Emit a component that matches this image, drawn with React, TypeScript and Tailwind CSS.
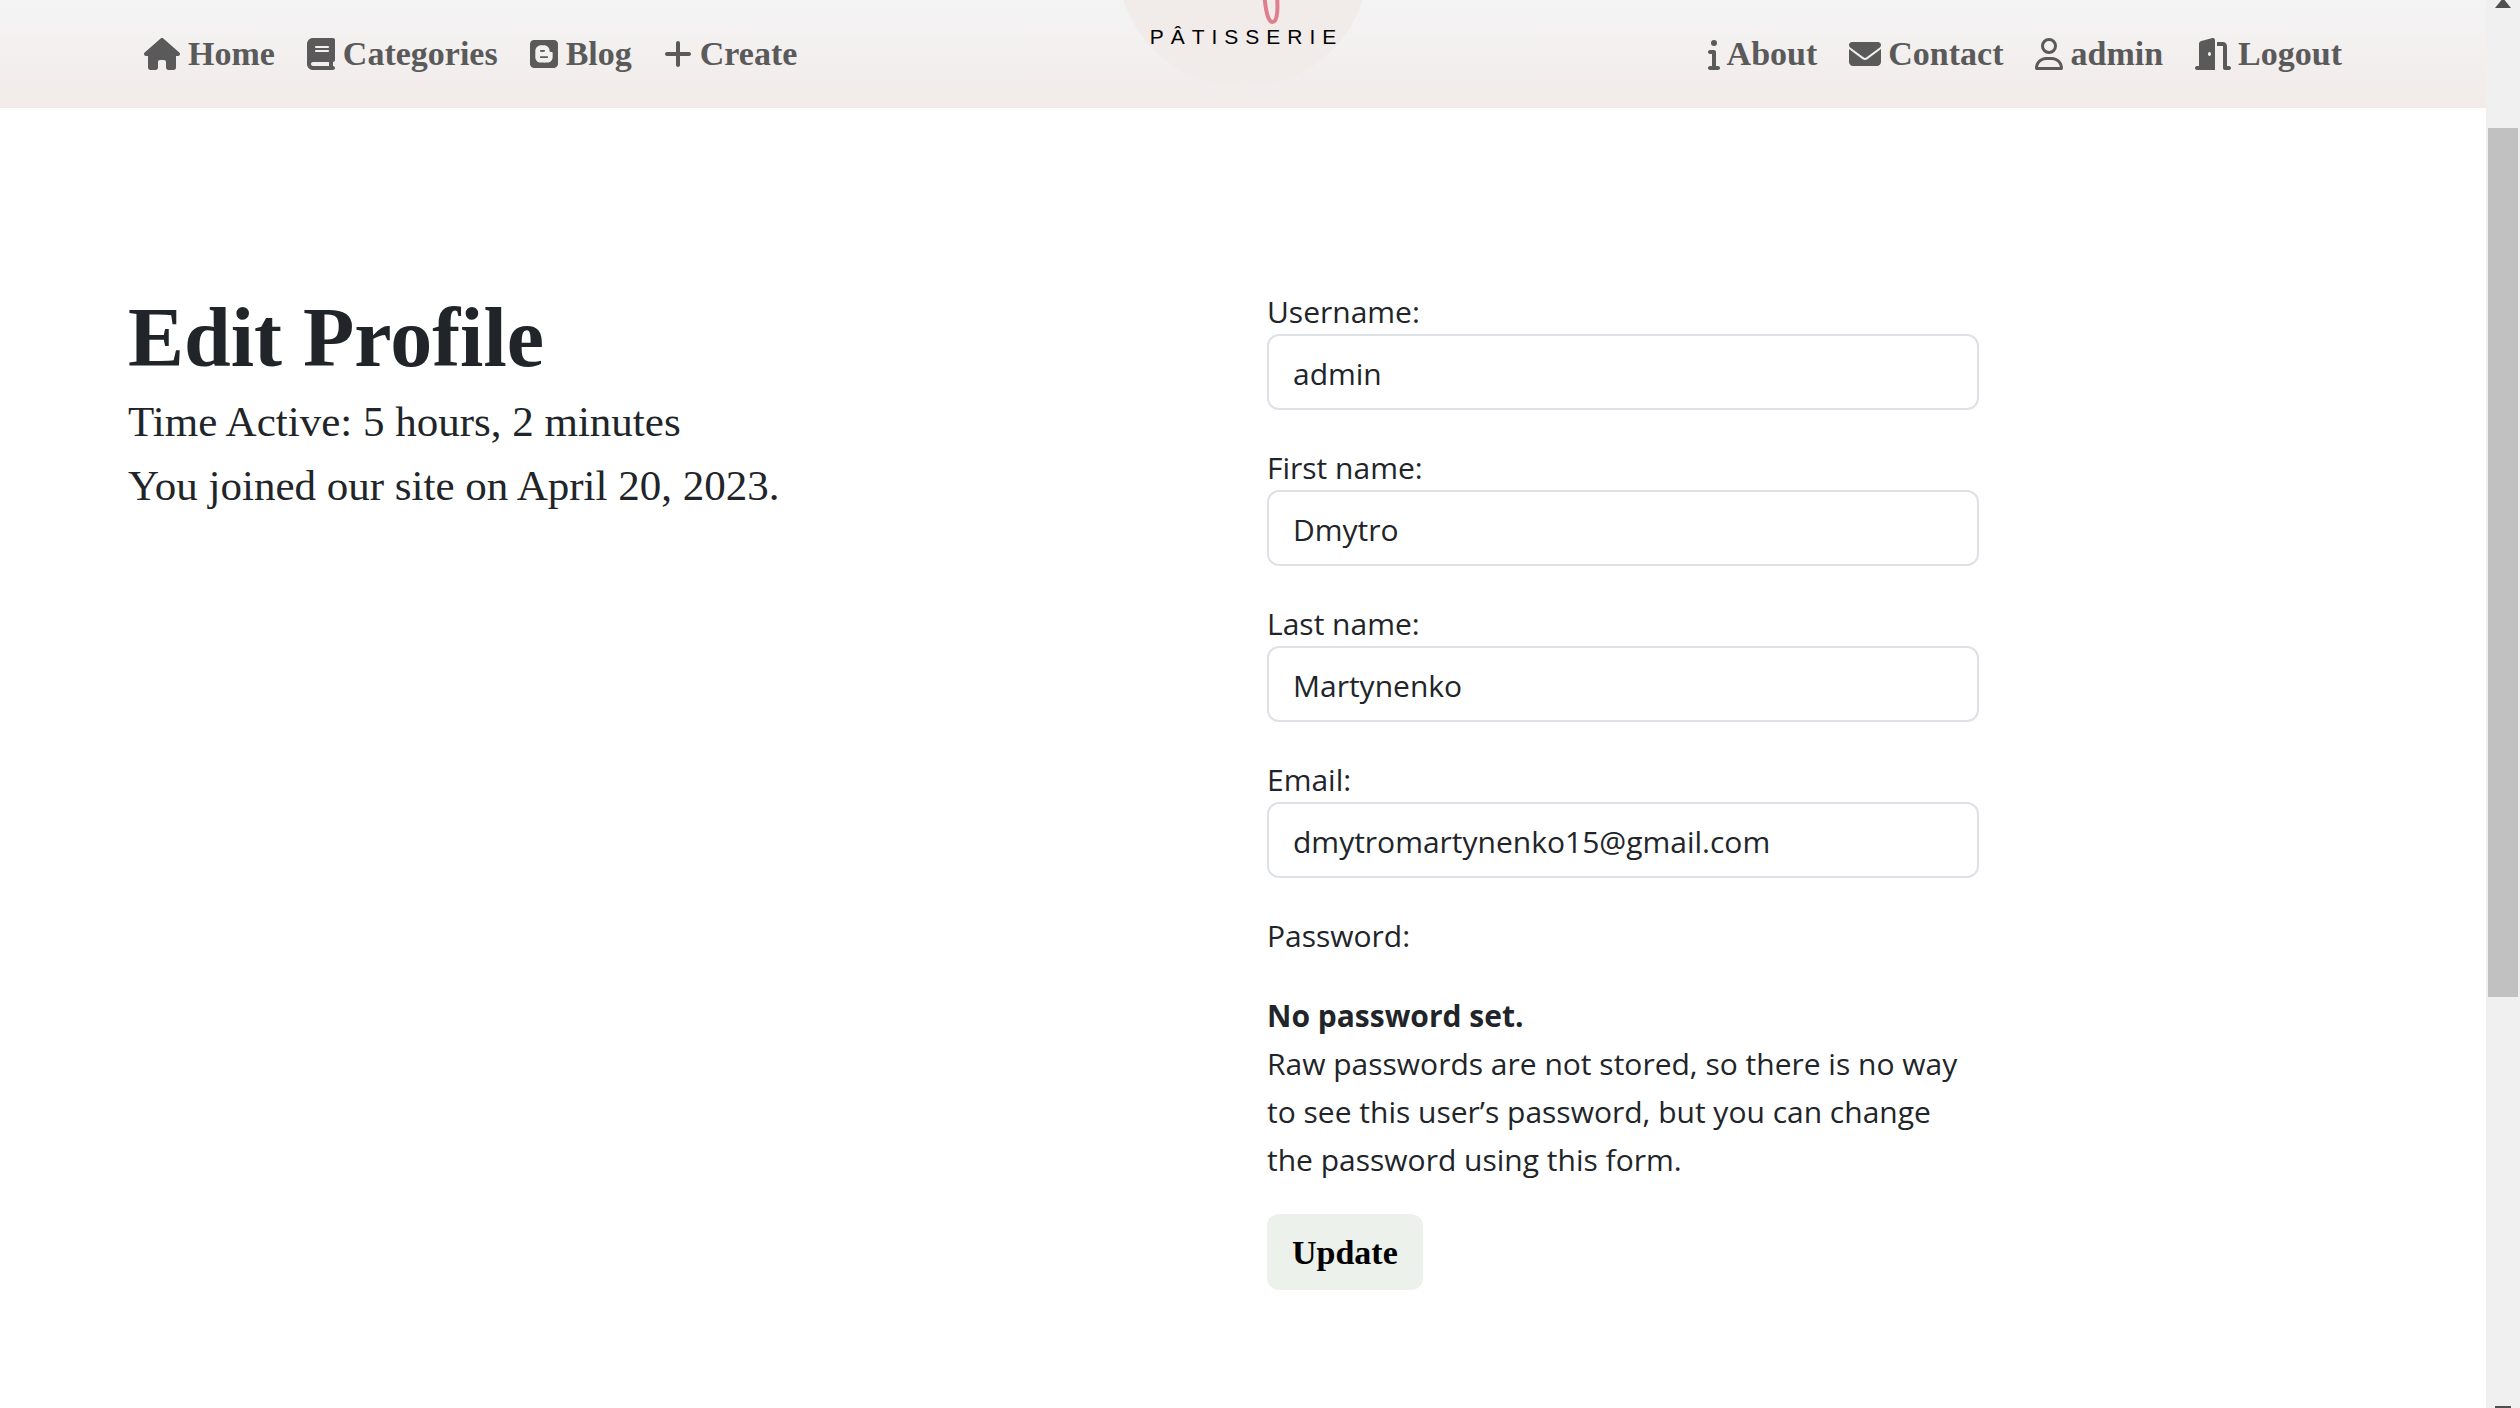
import type { ReactNode } from "react";
import {
  FaBlogger,
  FaBook,
  FaDoorOpen,
  FaEnvelope,
  FaHouse,
  FaInfo,
  FaPlus,
  FaRegUser,
} from "react-icons/fa6";

type NavItem = { label: string; icon: ReactNode };

const leftLinks: NavItem[] = [
  { label: "Home", icon: <FaHouse className="h-8 w-9" /> },
  { label: "Categories", icon: <FaBook className="h-8 w-7" /> },
  { label: "Blog", icon: <FaBlogger className="h-8 w-7" /> },
  { label: "Create", icon: <FaPlus className="h-8 w-7" /> },
];

const rightLinks: NavItem[] = [
  { label: "About", icon: <FaInfo className="h-8 w-3" /> },
  { label: "Contact", icon: <FaEnvelope className="h-8 w-8" /> },
  { label: "admin", icon: <FaRegUser className="h-8 w-7" /> },
  { label: "Logout", icon: <FaDoorOpen className="h-8 w-9" /> },
];

const fields = [
  { id: "username", label: "Username:", type: "text", value: "admin" },
  { id: "first-name", label: "First name:", type: "text", value: "Dmytro" },
  { id: "last-name", label: "Last name:", type: "text", value: "Martynenko" },
  { id: "email", label: "Email:", type: "email", value: "dmytromartynenko15@gmail.com" },
];

function NavLinks({ items, gap }: { items: NavItem[]; gap: string }) {
  return (
    <ul className="flex items-center">
      {items.map((item) => (
        <li key={item.label}>
          <a
            href="#"
            className={`flex items-center px-4 font-['Liberation_Serif',serif] text-[34px] leading-[48px] font-bold text-[#5a5a5a] ${gap}`}
          >
            {item.icon}
            {item.label}
          </a>
        </li>
      ))}
    </ul>
  );
}

function Logo() {
  return (
    <a
      href="#"
      aria-label="Pâtisserie"
      className="absolute bottom-[21px] left-1/2 flex size-[252px] -translate-x-1/2 flex-col items-center justify-end rounded-full bg-[#f1ebea] pb-[38px]"
    >
      <svg viewBox="0 0 30 40" className="ml-[58px] h-10 w-[30px]" fill="none" aria-hidden="true">
        <path
          d="M7 0 C7.500 20 10 37 15.500 37 C21 37 21.500 22 19 0"
          stroke="#dd7f8c"
          strokeWidth="4"
        />
      </svg>
      <span className="pl-[7px] font-['Liberation_Sans',sans-serif] text-[21px] leading-6 tracking-[7px] text-black">
        PÂTISSERIE
      </span>
    </a>
  );
}

function Scrollbar() {
  return (
    <div className="flex w-[34px] shrink-0 flex-col items-center justify-between bg-[#f0f0f0]" aria-hidden="true">
      <div className="flex h-[997px] w-full flex-col items-center justify-between">
        <svg viewBox="0 0 16 8" className="h-2 w-4" fill="#505050">
          <path d="M6.500 0h3L16 8H0z" />
        </svg>
        <div className="h-[869px] w-[30px] bg-[#c1c1c1]" />
      </div>
      <div className="h-0.5 w-4 bg-[#505050]" />
    </div>
  );
}

export default function App() {
  return (
    <div className="flex h-screen overflow-hidden bg-white text-[#212529]">
      <div className="min-w-0 flex-1">
        <header className="relative bg-linear-to-b from-[#f4f4f4] to-[#f2ebea]">
          <Logo />
          <nav className="relative flex h-[108px] items-center justify-between px-32">
            <NavLinks items={leftLinks} gap="gap-2" />
            <NavLinks items={rightLinks} gap="gap-[7px]" />
          </nav>
        </header>

        <main className="grid grid-cols-2 gap-12 px-32 pt-[178px]">
          <section className="font-['Liberation_Serif',serif] text-[43px] leading-[64px]">
            <h1 className="text-[84px] leading-[104px] font-bold">Edit Profile</h1>
            <p>Time Active: 5 hours, 2 minutes</p>
            <p>You joined our site on April 20, 2023.</p>
          </section>

          <form className="flex max-w-[712px] flex-col gap-8 font-['Open_Sans',sans-serif] text-[30px] leading-[48px]">
            {fields.map((field) => (
              <div key={field.id} className="flex flex-col">
                <label htmlFor={field.id} className="pt-1 leading-11">
                  {field.label}
                </label>
                <input
                  id={field.id}
                  type={field.type}
                  defaultValue={field.value}
                  className="h-[76px] w-full rounded-xl border-2 border-[#dee2e6] bg-white px-6 pt-0.5"
                />
              </div>
            ))}
            <p className="pt-1 leading-11">Password:</p>
            <div className="-mb-0.5 pt-0.5">
              <strong className="block font-bold">No password set.</strong>
              <p>
                Raw passwords are not stored, so there is no way to see this user’s password, but you can
                change the password using this form.
              </p>
            </div>
            <button
              type="submit"
              className="h-[76px] self-start rounded-xl bg-[#ecf1ec] px-[25px] pt-0.5 font-['Liberation_Serif',serif] text-[34px] font-bold text-black"
            >
              Update
            </button>
          </form>
        </main>
      </div>
      <Scrollbar />
    </div>
  );
}
